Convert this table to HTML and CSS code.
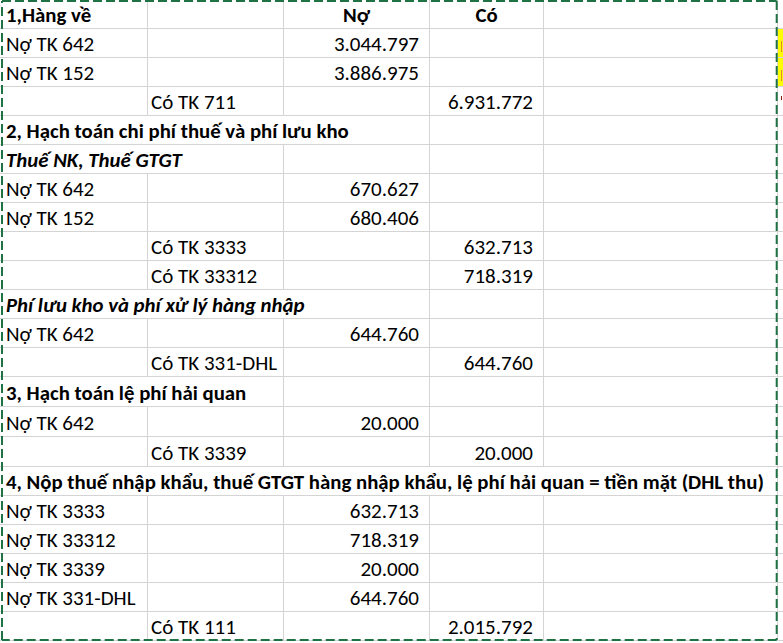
FILE: index.html
```html
<!DOCTYPE html>
<html lang="vi">
<head>
<meta charset="utf-8">
<title>Sheet</title>
<link rel="stylesheet" href="styles.css">
</head>
<body>
<div class="sheet">
  <div class="c a b">1,Hàng về</div><div class="c"></div><div class="c b ctr">Nợ</div><div class="c b ctr">Có</div><div class="c"></div><div class="c f"></div>

  <div class="c a">Nợ TK 642</div><div class="c"></div><div class="c num">3.044.797</div><div class="c"></div><div class="c"></div><div class="c f y"><span class="mk o"></span></div>
  <div class="c a">Nợ TK 152</div><div class="c"></div><div class="c num">3.886.975</div><div class="c"></div><div class="c"></div><div class="c f y"><span class="mk o"></span></div>
  <div class="c a"></div><div class="c">Có TK 711</div><div class="c"></div><div class="c num">6.931.772</div><div class="c"></div><div class="c f"><span class="mk r"></span></div>

  <div class="c a b s3">2, Hạch toán chi phí thuế và phí lưu kho</div><div class="c"></div><div class="c"></div><div class="c f"></div>
  <div class="c a b i s2">Thuế NK, Thuế GTGT</div><div class="c"></div><div class="c"></div><div class="c"></div><div class="c f"></div>
  <div class="c a">Nợ TK 642</div><div class="c"></div><div class="c num">670.627</div><div class="c"></div><div class="c"></div><div class="c f"></div>
  <div class="c a">Nợ TK 152</div><div class="c"></div><div class="c num">680.406</div><div class="c"></div><div class="c"></div><div class="c f"></div>
  <div class="c a"></div><div class="c">Có TK 3333</div><div class="c"></div><div class="c num">632.713</div><div class="c"></div><div class="c f"></div>
  <div class="c a"></div><div class="c">Có TK 33312</div><div class="c"></div><div class="c num">718.319</div><div class="c"></div><div class="c f"></div>

  <div class="c a b i s3">Phí lưu kho và phí xử lý hàng nhập</div><div class="c"></div><div class="c"></div><div class="c f"></div>
  <div class="c a">Nợ TK 642</div><div class="c"></div><div class="c num">644.760</div><div class="c"></div><div class="c"></div><div class="c f"></div>
  <div class="c a"></div><div class="c">Có TK 331-DHL</div><div class="c"></div><div class="c num">644.760</div><div class="c"></div><div class="c f"></div>

  <div class="c a b s2">3, Hạch toán lệ phí hải quan</div><div class="c"></div><div class="c"></div><div class="c"></div><div class="c f"></div>
  <div class="c a">Nợ TK 642</div><div class="c"></div><div class="c num">20.000</div><div class="c"></div><div class="c"></div><div class="c f"></div>
  <div class="c a"></div><div class="c">Có TK 3339</div><div class="c"></div><div class="c num">20.000</div><div class="c"></div><div class="c f"></div>

  <div class="c a b s5">4, Nộp thuế nhập khẩu, thuế GTGT hàng nhập khẩu, lệ phí hải quan = tiền mặt (DHL thu)</div><div class="c f"></div>
  <div class="c a">Nợ TK 3333</div><div class="c"></div><div class="c num">632.713</div><div class="c"></div><div class="c"></div><div class="c f"></div>
  <div class="c a">Nợ TK 33312</div><div class="c"></div><div class="c num">718.319</div><div class="c"></div><div class="c"></div><div class="c f"></div>
  <div class="c a">Nợ TK 3339</div><div class="c"></div><div class="c num">20.000</div><div class="c"></div><div class="c"></div><div class="c f"></div>
  <div class="c a">Nợ TK 331-DHL</div><div class="c"></div><div class="c num">644.760</div><div class="c"></div><div class="c"></div><div class="c f"></div>
  <div class="c a"></div><div class="c">Có TK 111</div><div class="c"></div><div class="c num">2.015.792</div><div class="c"></div><div class="c f"></div>
</div>
<svg class="marquee" width="783" height="643" viewBox="0 0 783 643" aria-hidden="true">
  <path d="M2 1 H776.7 M776.7 1 V640 M776.7 640 H2 M2 640 V1" fill="none" stroke="#1f7244" stroke-width="2" stroke-dasharray="9 4"/>
</svg>
</body>
</html>
```

FILE: styles.css
```css
html, body {
  margin: 0;
  padding: 0;
  background: #ffffff;
}

body {
  width: 783px;
  height: 643px;
  overflow: hidden;
  position: relative;
  font-family: Carlito, Calibri, "Liberation Sans Narrow", "Open Sans", sans-serif;
  font-size: 21px;
  color: #000000;
}

.sheet {
  display: grid;
  grid-template-columns: 148px 136px 146px 114px 234px 40px;
  grid-template-rows: repeat(13, 29px) repeat(3, 30px) repeat(6, 29px);
}

.c {
  box-sizing: border-box;
  border-right: 1px solid #d4d4d4;
  border-bottom: 1px solid #d4d4d4;
  padding: 0 3px 1px 3px;
  display: flex;
  align-items: flex-end;
  white-space: nowrap;
  line-height: 24px;
  min-width: 0;
  overflow: visible;
  position: relative;
  z-index: 1;
}

.c.a {
  padding-left: 6px;
}

.b {
  font-weight: bold;
  font-size: 20.8px;
}

.i { font-style: italic; }

.ctr { justify-content: center; }

.num {
  justify-content: flex-end;
  padding-right: 10px;
}

.s2 { grid-column: span 2; }
.s3 { grid-column: span 3; }
.s5 { grid-column: span 5; }

.f {
  overflow: hidden;
  padding: 0;
}

.y { background: #ffff00; }

.mk {
  display: block;
  width: 1px;
  height: 11px;
  margin: 0 0 5px 3px;
}

.mk.o { background: #e08a2a; }
.mk.r {
  background: #8a1c0c;
  height: 4px;
  margin-bottom: 15px;
}

.marquee {
  position: absolute;
  left: 0;
  top: 0;
  z-index: 5;
  pointer-events: none;
}
```
